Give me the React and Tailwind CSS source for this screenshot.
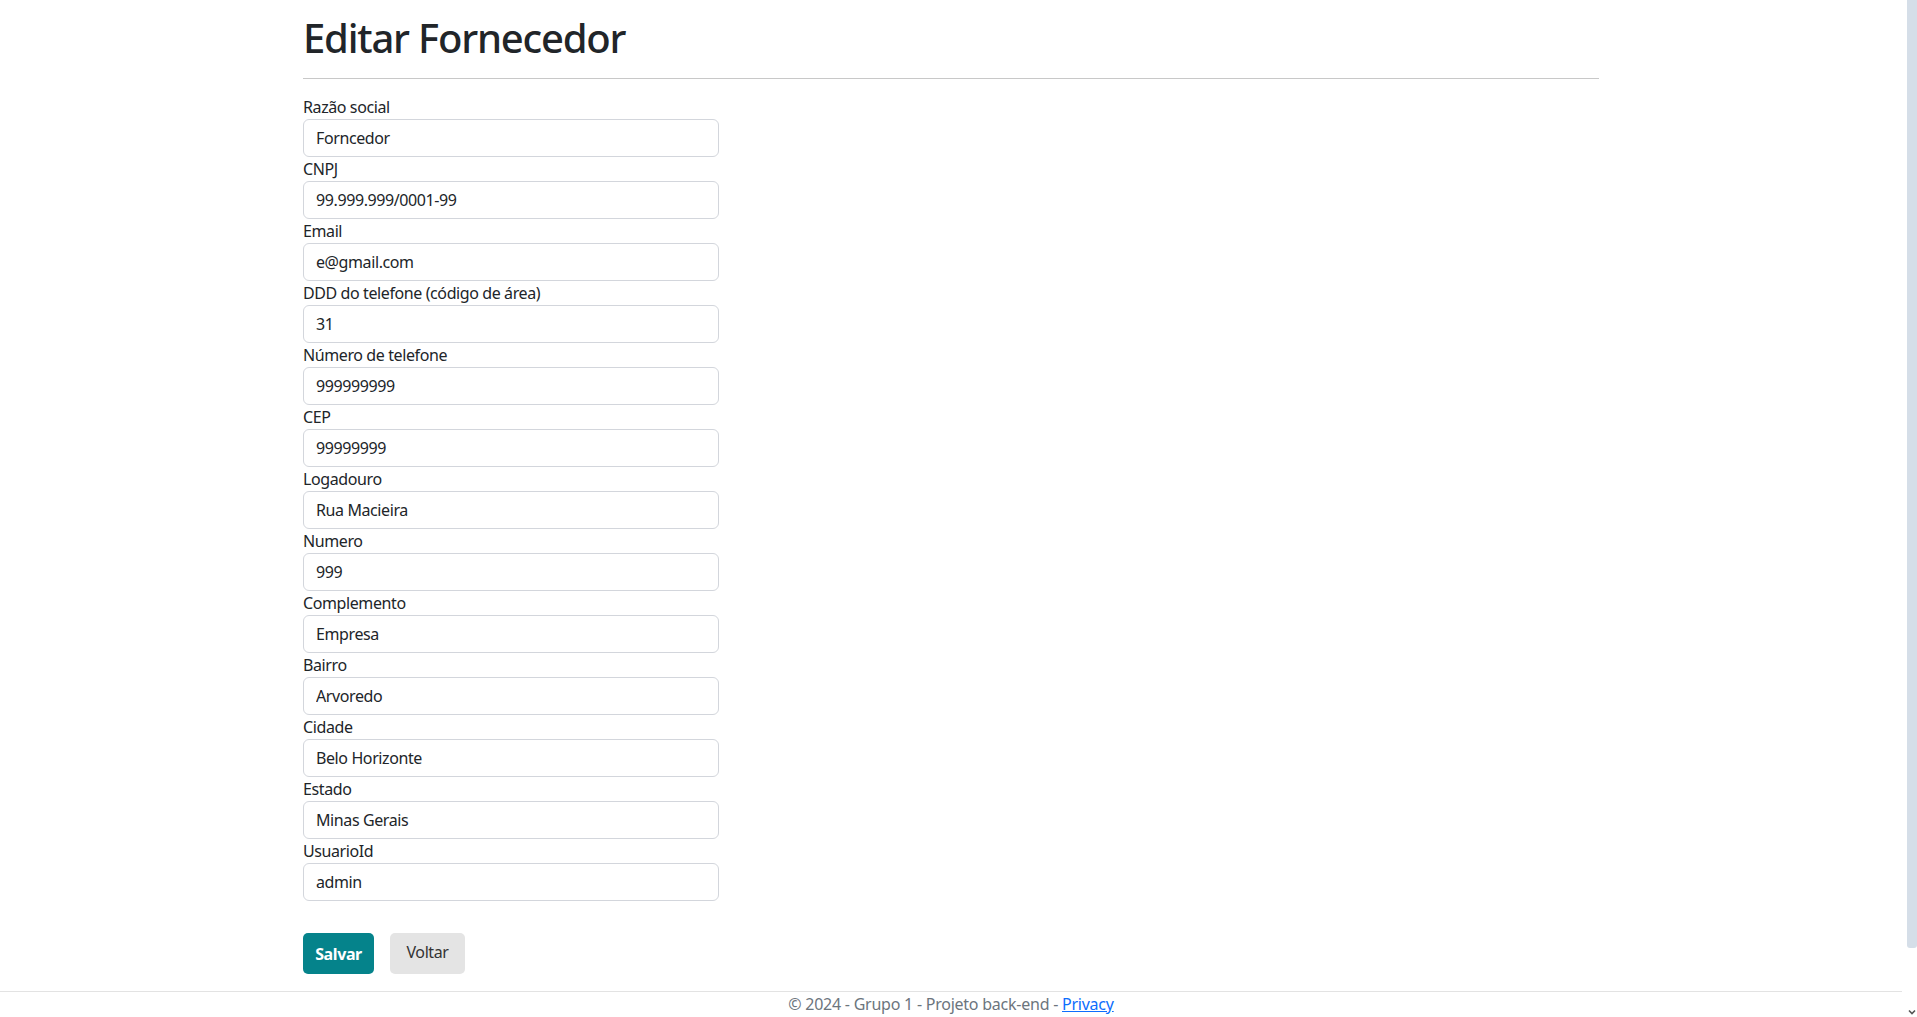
const fields = [
  { label: 'Razão social', value: 'Forncedor' },
  { label: 'CNPJ', value: '99.999.999/0001-99' },
  { label: 'Email', value: 'e@gmail.com' },
  { label: 'DDD do telefone (código de área)', value: '31' },
  { label: 'Número de telefone', value: '999999999' },
  { label: 'CEP', value: '99999999' },
  { label: 'Logadouro', value: 'Rua Macieira' },
  { label: 'Numero', value: '999' },
  { label: 'Complemento', value: 'Empresa' },
  { label: 'Bairro', value: 'Arvoredo' },
  { label: 'Cidade', value: 'Belo Horizonte' },
  { label: 'Estado', value: 'Minas Gerais' },
  { label: 'UsuarioId', value: 'admin' },
];

function Field({ label, value }) {
  return (
    <div>
      <label className="block leading-6 text-[#212529]">{label}</label>
      <input
        type="text"
        defaultValue={value}
        className="block h-[38px] w-[416px] rounded-[6px] border border-[#d3d6dc] bg-white px-3 text-base tracking-[-0.025em] text-[#212529] outline-none"
      />
    </div>
  );
}

export default function App() {
  return (
    <div
      className="flex h-screen overflow-hidden bg-white text-base tracking-[-0.025em] text-[#212529]"
      style={{ fontFamily: '"Noto Sans", "Open Sans", Arial, sans-serif' }}
    >
      {/* Page */}
      <div className="flex min-w-0 flex-1 flex-col">
        <main className="mx-auto w-full max-w-[1320px] flex-1 px-3 pt-[14px]">
          <h1 className="text-[40px] font-medium leading-[48px] tracking-[-0.03em] text-[#212529]">
            Editar Fornecedor
          </h1>
          <hr className="mt-4 mb-4 border-t border-[#c8c8c8]" />

          <form>
            {fields.map((f) => (
              <Field key={f.label} label={f.label} value={f.value} />
            ))}

            <div className="mt-8 flex items-start gap-4">
              <button
                type="submit"
                className="h-[41px] w-[71px] rounded-[5px] bg-[#05838b] pt-px text-base font-bold tracking-[-0.025em] text-white"
              >
                Salvar
              </button>
              <button
                type="button"
                className="h-[41px] w-[75px] rounded-[5px] bg-[#e4e4e4] pb-[3px] text-base tracking-[-0.025em] text-[#333]"
              >
                Voltar
              </button>
            </div>
          </form>
        </main>

        {/* Footer */}
        <footer className="border-t border-[#e3e3e3] pb-px text-center leading-6 tracking-[-0.015em] text-[#6c757d]">
          © 2024 - Grupo 1 - Projeto back-end -{' '}
          <a href="#" className="text-[#0d6efd] underline">
            Privacy
          </a>
        </footer>
      </div>

      {/* Scrollbar */}
      <div className="flex w-[15px] shrink-0 flex-col items-end">
        <div className="h-[948px] w-[10px] rounded-b-[3px] bg-[#d5dee8]" />
        <div className="flex w-[10px] flex-1 items-end justify-center pb-[2px]">
          <svg width="8" height="6" viewBox="0 0 8 6">
            <path d="M1 1.5 L4 4.5 L7 1.5" fill="none" stroke="#555" strokeWidth="1.6" />
          </svg>
        </div>
      </div>
    </div>
  );
}
